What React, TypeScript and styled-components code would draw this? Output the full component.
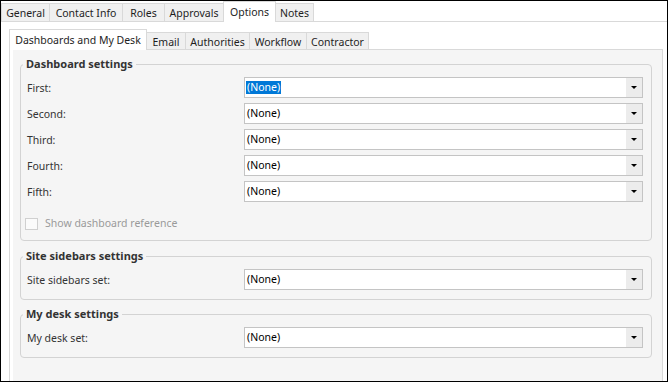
import React from "react";
import styled, { createGlobalStyle } from "styled-components";

const outerTabs = [
  { label: "General", w: 49 },
  { label: "Contact Info", w: 74 },
  { label: "Roles", w: 43 },
  { label: "Approvals", w: 60 },
  { label: "Options", w: 53, active: true },
  { label: "Notes", w: 39 },
];

const innerTabs = [
  { label: "Dashboards and My Desk", w: 138, active: true },
  { label: "Email", w: 40 },
  { label: "Authorities", w: 65 },
  { label: "Workflow", w: 58 },
  { label: "Contractor", w: 63 },
];

const dashboards = ["First:", "Second:", "Third:", "Fourth:", "Fifth:"];

export default function App() {
  return (
    <>
      <GlobalStyle />
      <Window>
        <TabStrip>
          {outerTabs.map((t) => (
            <OuterTab key={t.label} $w={t.w} $active={t.active}>
              {t.label}
            </OuterTab>
          ))}
        </TabStrip>
        <OuterPage>
          <InnerStrip>
            {innerTabs.map((t) => (
              <InnerTab key={t.label} $w={t.w} $active={t.active}>
                {t.label}
              </InnerTab>
            ))}
          </InnerStrip>
          <InnerPage>
            <PageBody>
              <Group $gap={8}>
                <Legend>Dashboard settings</Legend>
                <Rows>
                  {dashboards.map((label, i) => (
                    <Row key={label}>
                      <Label>{label}</Label>
                      <Combo value="(None)" selected={i === 0} />
                    </Row>
                  ))}
                </Rows>
                <CheckRow>
                  <CheckBox />
                  <CheckLabel>Show dashboard reference</CheckLabel>
                </CheckRow>
              </Group>
              <Group $gap={7}>
                <Legend>Site sidebars settings</Legend>
                <Rows>
                  <Row>
                    <Label>Site sidebars set:</Label>
                    <Combo value="(None)" />
                  </Row>
                </Rows>
              </Group>
              <Group $gap={0}>
                <Legend>My desk settings</Legend>
                <Rows>
                  <Row>
                    <Label>My desk set:</Label>
                    <Combo value="(None)" />
                  </Row>
                </Rows>
              </Group>
            </PageBody>
          </InnerPage>
        </OuterPage>
      </Window>
    </>
  );
}

function Combo({ value, selected }: { value: string; selected?: boolean }) {
  return (
    <ComboBox>
      <ComboValue $selected={selected}>{value}</ComboValue>
      <DropButton>
        <Arrow />
      </DropButton>
    </ComboBox>
  );
}

const GlobalStyle = createGlobalStyle`
  body {
    margin: 0;
    background: #ffffff;
  }
`;

const Window = styled.div`
  box-sizing: border-box;
  width: 668px;
  height: 382px;
  border: 1px solid #000000;
  background: #ffffff;
  overflow: hidden;
  display: flex;
  flex-direction: column;
  font-family: "Noto Sans", "Open Sans", sans-serif;
  font-size: 10.5px;
  color: #1e1e1e;
`;

const TabStrip = styled.div`
  display: flex;
  align-items: flex-end;
  height: 20px;
  border-bottom: 1px solid #d9d9d9;
`;

const OuterTab = styled.div<{ $w: number; $active?: boolean }>`
  box-sizing: border-box;
  width: ${(p) => p.$w}px;
  height: ${(p) => (p.$active ? 21 : 18)}px;
  margin-right: -1px;
  margin-bottom: ${(p) => (p.$active ? -1 : 0)}px;
  padding-top: ${(p) => (p.$active ? 0 : 1)}px;
  border: 1px solid #d9d9d9;
  border-bottom: none;
  background: ${(p) => (p.$active ? "#ffffff" : "#f0f0f0")};
  position: relative;
  z-index: ${(p) => (p.$active ? 1 : 0)};
  display: flex;
  align-items: center;
  justify-content: center;
  white-space: nowrap;
`;

const OuterPage = styled.div`
  flex: 1;
  display: flex;
  flex-direction: column;
  padding: 7px 4px 0 8px;
`;

const InnerStrip = styled.div`
  display: flex;
  align-items: flex-end;
  height: 20px;
  border-bottom: 1px solid #d9d9d9;
`;

const InnerTab = styled(OuterTab)`
  height: ${(p) => (p.$active ? 21 : 17)}px;
  padding-top: ${(p) => (p.$active ? 0 : 1)}px;
`;

const InnerPage = styled.div`
  flex: 1;
  display: flex;
  border-left: 1px solid #d9d9d9;
  border-right: 1px solid #d9d9d9;
  padding-left: 3px;
  background: #ffffff;
`;

const PageBody = styled.div`
  flex: 1;
  background: #f5f5f5;
  padding: 7px 10px 0 7px;
`;

const Group = styled.fieldset<{ $gap: number }>`
  margin: 0 0 ${(p) => p.$gap}px;
  padding: 0 8px 9px 6px;
  border: 1px solid #d3d3d3;
  border-radius: 4px;
  min-width: 0;
`;

const Legend = styled.legend`
  margin-left: -4px;
  padding: 0 3px;
  height: 14px;
  line-height: 14px;
  font-size: 11px;
  font-weight: 700;
  color: #333333;
`;

const Rows = styled.div`
  display: flex;
  flex-direction: column;
  gap: 5px;
  margin-top: 6px;
`;

const Row = styled.div`
  display: grid;
  grid-template-columns: 217px 1fr;
  align-items: center;
  height: 21px;
`;

const Label = styled.span`
  color: #333333;
  white-space: nowrap;
`;

const ComboBox = styled.div`
  box-sizing: border-box;
  height: 21px;
  border: 1px solid #c4c4c4;
  background: #ffffff;
  display: flex;
  align-items: center;
`;

const ComboValue = styled.span<{ $selected?: boolean }>`
  flex: 0 0 auto;
  margin-left: 1px;
  padding: 0 1px;
  height: 13px;
  line-height: 13px;
  color: ${(p) => (p.$selected ? "#ffffff" : "#000000")};
  background: ${(p) => (p.$selected ? "#0078d7" : "transparent")};
`;

const DropButton = styled.div`
  margin-left: auto;
  width: 16px;
  height: 100%;
  background: #ececec;
  display: flex;
  align-items: center;
  justify-content: center;
`;

const Arrow = styled.span`
  width: 0;
  height: 0;
  border-left: 3px solid transparent;
  border-right: 3px solid transparent;
  border-top: 3px solid #000000;
`;

const CheckRow = styled.div`
  display: flex;
  align-items: flex-start;
  height: 15px;
  line-height: 15px;
  margin: 14px 0 0 -2px;
`;

const CheckBox = styled.span`
  box-sizing: border-box;
  width: 13px;
  height: 12px;
  margin-top: 2px;
  border: 1px solid #d0d0d0;
  background: #fbfbfb;
`;

const CheckLabel = styled.span`
  margin-left: 7px;
  color: #9a9a9a;
`;
